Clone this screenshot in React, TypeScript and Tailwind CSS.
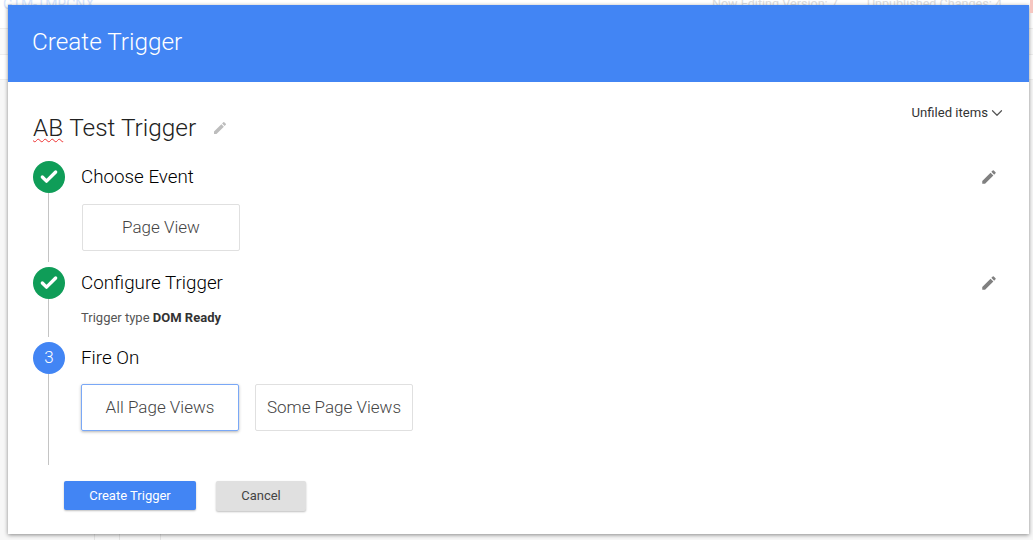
import { Check, ChevronDown } from "lucide-react";
import type { ReactNode } from "react";

function Pencil({ className }: { className: string }) {
  return (
    <svg viewBox="0 0 24 24" className={className} fill="currentColor">
      <path d="M3 17.25V21h3.75L17.81 9.94l-3.75-3.75L3 17.25zM20.71 7.04a1 1 0 0 0 0-1.41l-2.34-2.34a1 1 0 0 0-1.41 0l-1.83 1.83 3.75 3.75 1.83-1.83z" />
    </svg>
  );
}

function Step({
  badge,
  title,
  height,
  line = true,
  edit = false,
  children,
}: {
  badge: ReactNode;
  title: string;
  height: string;
  line?: boolean;
  edit?: boolean;
  children: ReactNode;
}) {
  return (
    <div className={`flex ${height}`}>
      <div className="flex w-8 shrink-0 flex-col">
        {badge}
        {line && <div className="ml-[15px] w-px grow bg-[#c4c4c4]" />}
      </div>
      <div className="ml-4 flex-1">
        <div className="flex h-8 items-center justify-between">
          <span className="text-[18.8px] font-light text-[#000]">{title}</span>
          {edit && <Pencil className="mr-[31px] h-[18px] w-[18px] text-[#808080]" />}
        </div>
        {children}
      </div>
    </div>
  );
}

const done = (
  <div className="flex h-8 w-8 shrink-0 items-center justify-center rounded-full bg-[#0f9d58]">
    <Check className="h-[20px] w-[20px] text-white" strokeWidth={4} />
  </div>
);

export default function App() {
  return (
    <div className="relative h-[540px] w-[1033px] overflow-hidden bg-white font-['Roboto',sans-serif]">
      {/* page behind the dialog */}
      <div className="flex h-[29px] items-start justify-between border-b border-[#eee] pl-[3px] pr-[31px] text-[12.6px] leading-[8px] text-[#ddd]">
        <span className="text-[14px] text-[#d5e3fb]">GTM-TMRCNX</span>
        <div className="flex gap-[29px]">
          <span>Now Editing Version: 7</span>
          <span>Unpublished Changes: 4</span>
        </div>
      </div>
      <div className="h-[26px] border-b border-[#eee] bg-[#fafafa]" />
      <div className="h-[25px] border-b border-[#eee]" />
      <div className="h-[454px] bg-[#f7f7f7]" />
      <div className="flex h-[6px] bg-[#f7f7f7]">
        <div className="w-[95px] border-r border-[#e4e4e4]" />
        <div className="w-[25px] border-r border-[#e4e4e4]" />
        <div className="w-[41px] border-r border-[#e4e4e4]" />
      </div>

      <div className="absolute left-2 top-[5px] flex h-[529px] w-[1021px] flex-col bg-white shadow-[0_1px_4px_rgba(0,0,0,0.45)]">
        <header className="flex h-[77px] shrink-0 items-center bg-[#4285f4] pb-[3px] pl-[24px] text-[24.3px] font-light text-white">
          Create Trigger
        </header>

        <div className="relative flex-1 pl-[25px]">
          <div className="absolute right-[23px] top-[21px] flex items-center text-[13.1px] text-[#333]">
            Unfiled items
            <ChevronDown className="h-[18px] w-[18px] text-[#555]" strokeWidth={1.6} />
          </div>

          <div className="flex h-[79px] items-start pt-[27px]">
            <span className="text-[24.4px] font-light leading-[38px] text-[#212121] underline decoration-wavy decoration-[#e33] decoration-1 underline-offset-2 [text-decoration-skip-ink:none]">
              AB
            </span>
            <span className="ml-[6px] text-[24.4px] font-light leading-[38px] text-[#212121]">Test Trigger</span>
            <Pencil className="ml-4 mt-[11px] h-[16px] w-[16px] text-[#bdbdbd]" />
          </div>

          <Step badge={done} title="Choose Event" height="h-[101px]" edit>
            <div className="mt-[11px] ml-px flex h-[47px] w-[158px] items-center justify-center rounded-[2px] border border-[#e0e0e0] text-[17px] font-light text-[#444]">
              Page View
            </div>
          </Step>

          <div className="h-[5px]" />
          <Step badge={done} title="Configure Trigger" height="h-[70px]" edit>
            <p className="mt-[10px] text-[13px] leading-[18px] text-[#555]">
              Trigger type <b className="font-bold text-[#333]">DOM Ready</b>
            </p>
          </Step>

          <div className="h-[5px]" />
          <Step
            badge={
              <div className="flex h-8 w-8 shrink-0 items-center justify-center rounded-full bg-[#4285f4] text-[17px] font-light text-white">
                3
              </div>
            }
            title="Fire On"
            height="h-[123px]"
          >
            <div className="mt-[10px] flex gap-4">
              <div className="flex h-[47px] w-[158px] items-center justify-center rounded-[2px] border border-[#7aa8f6] text-[17px] font-light text-[#444] shadow-[0_1px_3px_rgba(0,0,0,0.3)]">
                All Page Views
              </div>
              <div className="flex h-[47px] w-[158px] items-center justify-center rounded-[2px] border border-[#e0e0e0] text-[17px] font-light text-[#444]">
                Some Page Views
              </div>
            </div>
          </Step>

          <div className="mt-4 flex items-start gap-5 pl-[31px]">
            <button className="h-[29px] w-[132px] rounded-[2px] bg-[#4285f4] text-[13px] text-white shadow-[0_1px_2px_rgba(0,0,0,0.25)]">
              Create Trigger
            </button>
            <button className="h-[30px] w-[90px] rounded-[2px] bg-[#e0e0e0] text-[13px] text-[#444] shadow-[0_1px_2px_rgba(0,0,0,0.25)]">
              Cancel
            </button>
          </div>
        </div>
      </div>
      {/* bit of the page's red notice showing past the dialog */}
      <div className="absolute right-0 top-0 h-[13px] w-[3px] bg-[#f6c6c0]" />
    </div>
  );
}
